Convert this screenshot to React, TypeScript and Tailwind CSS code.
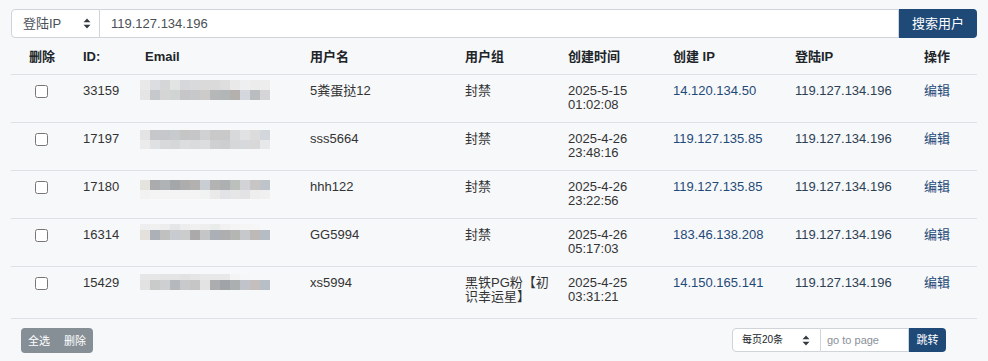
import React from 'react';

type Strip = { h: number; c: string[] };

interface UserRow {
  id: string;
  blurTop: number;
  blur: Strip[];
  name: string;
  group: string;
  date: string;
  time: string;
  createIp: string;
  loginIp: string;
  tall?: boolean;
}

const rows: UserRow[] = [
  {
    id: '33159',
    blurTop: 5,
    blur: [
      { h: 10, c: ['#e9e9e9', '#dbdde1', '#d5d6d8', '#e2e4e4', '#d6d7da', '#d9dadc', '#dadada', '#dadada', '#dedede', '#e9e9ea', '#eeeff0', '#ececed', '#ededee'] },
      { h: 10, c: ['#e5e5e5', '#c5c9cc', '#d6d5d6', '#d0d4d3', '#c6c6c9', '#c6c8ca', '#cdcbca', '#b5b7b8', '#b3b6b7', '#b3b0ad', '#d4d8de', '#babdbf', '#d5d5d7'] },
    ],
    name: '5粪蛋挞12',
    group: '封禁',
    date: '2025-5-15',
    time: '01:02:08',
    createIp: '14.120.134.50',
    loginIp: '119.127.134.196',
  },
  {
    id: '17197',
    blurTop: 7,
    blur: [
      { h: 10, c: ['#e4e4e4', '#c5c7ca', '#c5c7ca', '#c8cbcd', '#c5c5c6', '#c6c6c8', '#d0d1d2', '#c9c9ca', '#c9c9ca', '#d7d9da', '#e1e2e4', '#dcdcdd', '#d3d7dc'] },
      { h: 9, c: ['#ebebeb', '#e0e1e2', '#d8d9db', '#d6d7d9', '#dcdddf', '#dadbdc', '#dcdddf', '#cfd0d2', '#ccced0', '#d6d7d9', '#d8d9dc', '#d9d8d8', '#e6e8ea'] },
    ],
    name: 'sss5664',
    group: '封禁',
    date: '2025-4-26',
    time: '23:48:16',
    createIp: '119.127.135.85',
    loginIp: '119.127.134.196',
  },
  {
    id: '17180',
    blurTop: 9,
    blur: [
      { h: 10, c: ['#e5e3de', '#a9abad', '#b0b3b6', '#a4a7aa', '#aeadad', '#b2b1af', '#c9ced4', '#b3b3b4', '#aeafb1', '#bcc0bd', '#d2d3d6', '#c8c6c4', '#bfc3ca'] },
      { h: 9, c: ['#f2f2f2', '#f4f4f4', '#f4f4f4', '#f4f4f4', '#f4f4f4', '#f3f4f3', '#f1f2f2', '#eaeaea', '#e2e3e6', '#e6e6e6', '#e3e3e6', '#eeeeef', '#f0f0f1'] },
    ],
    name: 'hhh122',
    group: '封禁',
    date: '2025-4-26',
    time: '23:22:56',
    createIp: '119.127.135.85',
    loginIp: '119.127.134.196',
  },
  {
    id: '16314',
    blurTop: 5,
    blur: [
      { h: 6, c: ['#eeeeee', '#f0f0f1', '#ededee', '#e5e6e7', '#ededee', '#f0f0f0', '#eeeeee', '#eaebeb', '#f1f1f1', '#f4f4f4', '#f5f5f6', '#f6f6f7', '#f7f8fa'] },
      { h: 10, c: ['#e4e1dc', '#acb1b8', '#c0c0c0', '#c8cbd0', '#cbcccc', '#aca9aa', '#c4c5c6', '#aab0b5', '#aeadaf', '#b4b6b4', '#c7c8cc', '#bdb9b6', '#b5bcc4'] },
    ],
    name: 'GG5994',
    group: '封禁',
    date: '2025-4-26',
    time: '05:17:03',
    createIp: '183.46.138.208',
    loginIp: '119.127.134.196',
  },
  {
    id: '15429',
    blurTop: 7,
    blur: [
      { h: 6, c: ['#e6e6e6', '#e6e6e6', '#e4e4e5', '#e4e4e4', '#e2e2e2', '#e5e5e5', '#e8e8e8', '#e8e8e8', '#e8e8e8', '#f4f4f4', '#f6f7f8', '#f7f8fa', '#f7f8fa'] },
      { h: 10, c: ['#e2e2e2', '#c9cbca', '#cdcfd0', '#b5b8bc', '#c8c9ca', '#c6c6c7', '#e3e3e4', '#acadae', '#a0a3a7', '#acafaf', '#c0c3c9', '#c4bfbd', '#b7bec6'] },
    ],
    name: 'xs5994',
    group: '黑铁PG粉【初识幸运星】',
    date: '2025-4-25',
    time: '03:31:21',
    createIp: '14.150.165.141',
    loginIp: '119.127.134.196',
    tall: true,
  },
];

const grid = 'grid grid-cols-[62px_62px_165px_155px_103px_105px_122px_129px_1fr]';

function UpDown() {
  return (
    <svg width="8" height="11" viewBox="0 0 8 11" className="text-[#343a40]">
      <path d="M4 0.5 L7.5 4.2 H0.5 Z" fill="currentColor" />
      <path d="M4 10.5 L7.5 6.8 H0.5 Z" fill="currentColor" />
    </svg>
  );
}

function Blur({ top, strips }: { top: number; strips: Strip[] }) {
  return (
    <div className="ml-[5px] flex flex-col" style={{ marginTop: top }}>
      {strips.map((s, i) => (
        <div key={i} className="flex" style={{ height: s.h }}>
          {s.c.map((c, j) => (
            <div key={j} className="w-[10px]" style={{ background: c }} />
          ))}
        </div>
      ))}
    </div>
  );
}

export default function App() {
  return (
    <div className="w-[988px] h-[361px] bg-[#f7f8fa] px-[11px] pt-[9px] font-['Liberation_Sans','Noto_Sans_CJK_SC',sans-serif] text-[13px] leading-[14px] text-[#333]">
      {/* search bar */}
      <div className="flex h-[29px]">
        <div className="w-[89px] flex items-center justify-between pl-[11px] pr-[8px] bg-white border border-[#ced4da] rounded-l-[4px] text-[#495057]">
          <span>登陆IP</span>
          <UpDown />
        </div>
        <div className="flex-1 flex items-center pl-[11px] bg-white border-y border-r border-[#ced4da] text-[#495057]">
          119.127.134.196
        </div>
        <button className="w-[78px] bg-[#1f4a78] text-white rounded-r-[4px] flex items-center justify-center">
          搜索用户
        </button>
      </div>

      {/* table head */}
      <div className={`${grid} h-[37px] pt-[12px] border-b border-[#dee2e6] font-bold text-[#212529]`}>
        <div className="text-center">删除</div>
        <div className="pl-[10px]">ID:</div>
        <div className="pl-[10px]">Email</div>
        <div className="pl-[10px]">用户名</div>
        <div className="pl-[10px]">用户组</div>
        <div className="pl-[10px]">创建时间</div>
        <div className="pl-[10px]">创建 IP</div>
        <div className="pl-[10px]">登陆IP</div>
        <div className="pl-[10px]">操作</div>
      </div>

      {/* table body */}
      {rows.map((r) => (
        <div key={r.id} className={`${grid} ${r.tall ? 'h-[52px]' : 'h-[48px]'} border-b border-[#dee2e6]`}>
          <div className="flex justify-center pt-[10px] pr-[1px]">
            <input type="checkbox" className="w-[13px] h-[13px]" />
          </div>
          <div className="pl-[10px] pt-[9px]">{r.id}</div>
          <div>
            <Blur top={r.blurTop} strips={r.blur} />
          </div>
          <div className="pl-[10px] pt-[9px]">{r.name}</div>
          <div className="pl-[10px] pr-[4px] pt-[9px]">{r.group}</div>
          <div className="pl-[10px] pt-[9px]">
            <div>{r.date}</div>
            <div>{r.time}</div>
          </div>
          <div className="pl-[10px] pt-[9px] text-[#1f4a78]">{r.createIp}</div>
          <div className="pl-[10px] pt-[9px] text-[#2b3f55]">{r.loginIp}</div>
          <div className="pl-[10px] pt-[9px]">
            <a className="text-[#1f4a78]">编辑</a>
          </div>
        </div>
      ))}

      {/* footer */}
      <div className="flex justify-between items-start mt-[9px] pl-[10px] pr-[31px]">
        <div className="h-[25px] flex items-center gap-[14px] pl-[7px] pr-[7px] bg-[#868e96] rounded-[4px] text-white text-[11px]">
          <span>全选</span>
          <span>删除</span>
        </div>
        <div className="flex h-[24px] text-[11px]">
          <div className="w-[89px] flex items-center justify-between pl-[9px] pr-[10px] bg-white border border-[#ced4da] rounded-l-[4px] text-[#212529]">
            <span className="text-[10px]">每页20条</span>
            <UpDown />
          </div>
          <div className="w-[88px] flex items-center pl-[6px] bg-white border-y border-r border-[#ced4da] text-[#8a9097]">
            go to page
          </div>
          <button className="w-[37px] bg-[#1f4a78] text-white rounded-r-[4px] flex items-center justify-center">
            跳转
          </button>
        </div>
      </div>
    </div>
  );
}
